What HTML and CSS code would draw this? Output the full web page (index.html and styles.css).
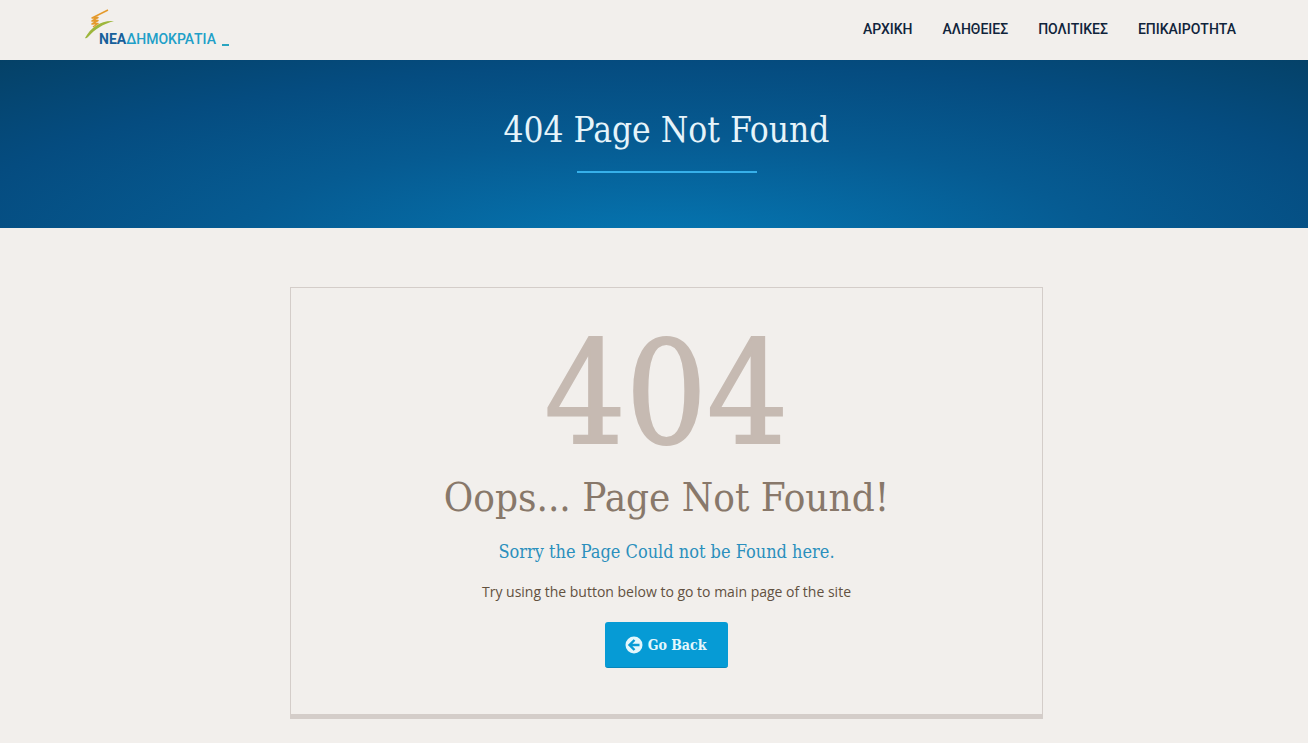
FILE: index.html
```html
<!DOCTYPE html>
<html lang="el">
<head>
<meta charset="utf-8">
<meta name="viewport" content="width=device-width, initial-scale=1">
<title>404 Page Not Found</title>
<link rel="stylesheet" href="styles.css">
</head>
<body>
<header class="site-header">
  <a class="logo" href="#" aria-label="ΝΕΑ ΔΗΜΟΚΡΑΤΙΑ">
    <svg class="logo-art" width="148" height="42" viewBox="0 0 148 42">
      <path d="M1 29C7 18 17 11 30 12C19 15 11 20 4 28Q2 30 1 29Z" fill="#9db63c"/>
      <path d="M24 1L8 9L14 8.500L8 12L14 11.500L8 15L14 14.500L9 18" fill="none" stroke="#e49a2c" stroke-width="1.500" stroke-linejoin="round"/>
      <text class="logo-text" x="15" y="35"><tspan class="logo-strong">ΝΕΑ</tspan><tspan class="logo-light">ΔΗΜΟΚΡΑΤΙΑ</tspan></text>
      <rect x="138" y="35" width="7" height="2" fill="#2aa5c0"/>
    </svg>
  </a>
  <nav class="menu">
    <a href="#">ΑΡΧΙΚΗ</a>
    <a href="#">ΑΛΗΘΕΙΕΣ</a>
    <a href="#">ΠΟΛΙΤΙΚΕΣ</a>
    <a href="#">ΕΠΙΚΑΙΡΟΤΗΤΑ</a>
  </nav>
</header>
<section class="banner">
  <h1>404 Page Not Found</h1>
</section>
<main class="content">
  <section class="error-box">
    <div class="code">404</div>
    <h2>Oops... Page Not Found!</h2>
    <h3>Sorry the Page Could not be Found here.</h3>
    <p>Try using the button below to go to main page of the site</p>
    <button class="back" type="button">
      <svg width="18" height="18" viewBox="0 0 18 18"><circle cx="9" cy="9" r="8.500" fill="#e4f7fc"/><path d="M14.500 9H5M9.500 4L4.500 9L9.500 14" fill="none" stroke="#069bd5" stroke-width="2.400"/></svg>
      Go Back
    </button>
  </section>
</main>
</body>
</html>
```
FILE: styles.css
```css
* { box-sizing: border-box; }
body {
  margin: 0;
  background: #f2efec;
  color: #62513f;
  font-family: "Open Sans", sans-serif;
}
h1, h2, h3, p { margin: 0; }
.site-header {
  display: flex;
  align-items: center;
  justify-content: space-between;
  height: 60px;
  padding: 0 72px 0 84px;
}
.logo-art { display: block; }
.logo-text { font-family: Roboto, sans-serif; font-size: 14px; }
.logo-strong { font-weight: 700; fill: #17609b; }
.logo-light { fill: #219fc8; font-weight: 500; }
.menu { display: flex; gap: 30px; padding-bottom: 2px; }
.menu a {
  color: #10243b;
  font: 500 14px/20px Roboto, sans-serif;
  text-decoration: none;
}
.banner {
  display: flex;
  justify-content: center;
  height: 168px;
  padding: 45px 0 0 25px;
  background: radial-gradient(ellipse 75% 150% at 51% 115%, #0579b5 0%, #065b92 45%, #054c80 75%, #053f62 108%);
}
.banner h1 {
  display: flex;
  flex-direction: column;
  align-items: center;
  gap: 16px;
  color: #e6f4fa;
  font: 300 35px/50px "Roboto Slab", "DejaVu Serif Condensed", serif;
}
.banner h1::after { content: ""; width: 180px; height: 2px; background: #36b0ea; }
.content { padding: 59px 24px 24px 49px; }
.error-box {
  display: flex;
  flex-direction: column;
  align-items: center;
  max-width: 753px;
  margin: 0 auto;
  padding: 36px 20px 46px;
  border: 1px solid #d4cdc9;
  border-bottom: 5px solid #d4cdc9;
  text-align: center;
}
.code {
  color: #c6bab2;
  font: 400 142px/140px "Roboto Slab", "DejaVu Serif Condensed", serif;
  -webkit-text-stroke: 2px #c6bab2;
}
.error-box h2 { color: #88786a; font: 300 40px/66px "Roboto Slab", "DejaVu Serif Condensed", serif; }
.error-box h3 { color: #2b8fbd; font: 400 18px/44px "Roboto Slab", "DejaVu Serif Condensed", serif; }
.error-box p { font-size: 14px; line-height: 36px; }
.back {
  display: flex;
  align-items: center;
  gap: 5px;
  height: 46px;
  margin-top: 12px;
  padding: 0 22px 0 20px;
  border: 0;
  border-bottom: 1px solid #0686bb;
  border-radius: 3px;
  background: #069bd5;
  color: #e4f7fc;
  font: 700 14px/20px "Roboto Slab", "DejaVu Serif Condensed", serif;
}
```
